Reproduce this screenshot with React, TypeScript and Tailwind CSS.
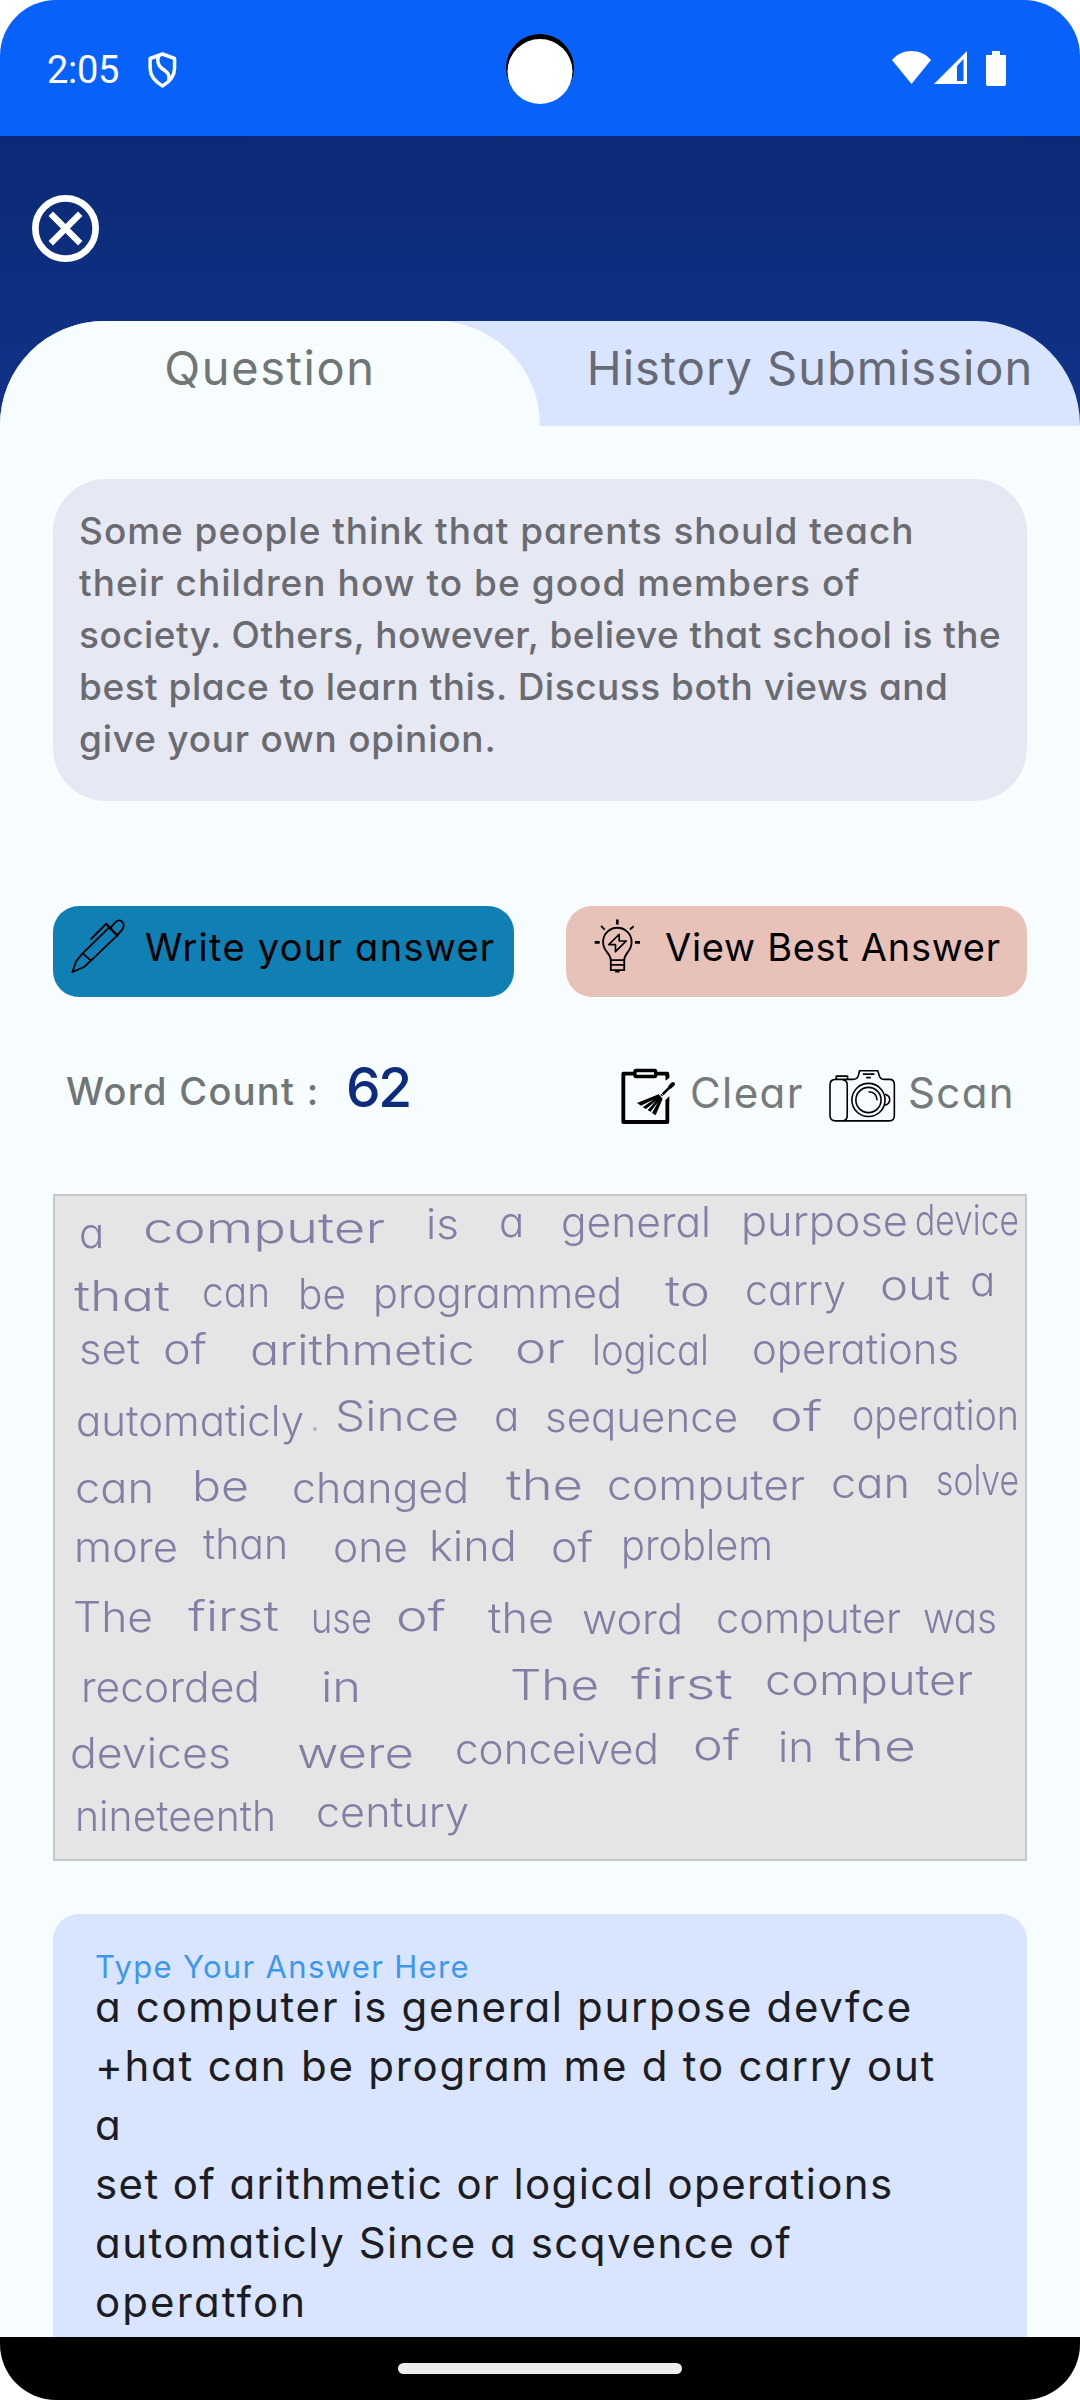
import React from "react";

type Line = { text: string; tracking: string };

const questionLines: Line[] = [
  { text: "Some people think that parents should teach", tracking: "tracking-[0.98px]" },
  { text: "their children how to be good members of", tracking: "tracking-[1.06px]" },
  { text: "society. Others, however, believe that school is the", tracking: "tracking-[0.46px]" },
  { text: "best place to learn this. Discuss both views and", tracking: "tracking-[0.52px]" },
  { text: "give your own opinion.", tracking: "tracking-[0.78px]" },
];

const answerLines: Line[] = [
  { text: "a computer is general purpose devfce", tracking: "tracking-[1.64px]" },
  { text: "+hat can be program me d to carry out", tracking: "tracking-[1.75px]" },
  { text: "a", tracking: "tracking-normal" },
  { text: "set of arithmetic or logical operations", tracking: "tracking-[1.38px]" },
  { text: "automaticly Since a scqvence of", tracking: "tracking-[1.53px]" },
  { text: "operatfon", tracking: "tracking-[2.1px]" },
];

// word, left, right, baseline
type Word = [string, number, number, number];

const handwriting: Word[] = [
  ["a", 28, 54, 54], ["computer", 92, 330, 49], ["is", 375, 404, 45], ["a", 448, 470, 43],
  ["general", 510, 656, 43], ["purpose", 690, 853, 42], ["device", 864, 964, 41],
  ["that", 23, 115, 117], ["can", 151, 215, 113], ["be", 247, 291, 115], ["programmed", 322, 567, 114],
  ["to", 614, 655, 112], ["carry", 694, 791, 111], ["out", 829, 895, 106], ["a", 919, 943, 102],
  ["set", 28, 85, 170], ["of", 112, 152, 170], ["arithmetic", 199, 420, 171], ["or", 464, 510, 169],
  ["logical", 541, 654, 171], ["operations", 701, 904, 170],
  ["automaticly", 25, 249, 242], ["Since", 284, 404, 237], ["a", 443, 465, 237],
  ["sequence", 494, 683, 238], ["of", 719, 767, 237], ["operation", 801, 964, 236],
  ["can", 24, 99, 309], ["be", 141, 194, 307], ["changed", 241, 414, 309], ["the", 455, 528, 306],
  ["computer", 556, 750, 306], ["can", 780, 855, 304], ["solve", 885, 964, 301],
  ["more", 23, 123, 368], ["than", 152, 233, 365], ["one", 282, 353, 368], ["kind", 378, 462, 367],
  ["of", 500, 538, 368], ["problem", 570, 718, 366],
  ["The", 22, 98, 438], ["first", 137, 224, 437], ["use", 260, 317, 439], ["of", 345, 391, 437],
  ["the", 437, 499, 439], ["word", 531, 628, 440], ["computer", 665, 846, 439], ["was", 872, 942, 439],
  ["recorded", 30, 205, 508], ["in", 270, 306, 508], ["The", 459, 544, 506], ["first", 580, 678, 505],
  ["computer", 714, 918, 501],
  ["devices", 19, 176, 574], ["were", 246, 359, 574], ["conceived", 404, 604, 570], ["of", 642, 685, 566],
  ["in", 727, 759, 568], ["the", 784, 861, 567],
  ["nineteenth", 24, 221, 637], ["century", 265, 414, 633],
];

function StatusBar() {
  return (
    <div className="relative flex h-[136px] shrink-0 items-start justify-between bg-[#0861f8] pr-[74px] pl-[47px] text-white">
      <div className="flex items-start">
        <span className="mt-[47px] w-[101px] font-[Roboto] text-[38px] leading-[46px] tracking-[-0.3px]">2:05</span>
        <svg className="mt-[52px] h-[36px] w-[29px]" viewBox="0 0 30 36" preserveAspectRatio="none" fill="none" stroke="currentColor" strokeWidth="3.6" strokeLinejoin="round">
          <path d="M15 2 L27.500 6.500 V16 C27.500 25 22 30 15 34 C8 30 2.200 25 2.200 16 V6.500 Z" />
          <path d="M11 4 C9 9 10 13 14.500 16.500 C20 20 22.500 22 21.500 28" />
        </svg>
      </div>
      <div className="absolute top-[34px] left-1/2 size-[68px] -translate-x-1/2 rounded-full bg-black" />
      <div className="absolute top-[39px] left-1/2 size-[65px] -translate-x-1/2 rounded-full bg-white" />
      <div className="mt-[51px] flex items-start">
        <svg className="h-[33px] w-[39px]" viewBox="0 0 39 33" fill="currentColor">
          <path d="M0 9 C10 -3 29 -3 39 9 L19.500 33 Z" />
        </svg>
        <svg className="ml-[3px] h-[33px] w-[33px]" viewBox="0 0 33 33">
          <path fill="currentColor" fillRule="evenodd" d="M33 0 V33 H0 Z M29.500 8 L23 15 V30 H29.500 Z" />
        </svg>
        <svg className="ml-[19px] h-[35px] w-[20px]" viewBox="0 0 20 35" fill="currentColor">
          <path d="M6 0 H14 V4 H20 V33 Q20 35 18 35 H2 Q0 35 0 33 V4 H6 Z" />
        </svg>
      </div>
    </div>
  );
}

function PenIcon() {
  return (
    <svg className="h-[54px] w-[54px]" viewBox="62 40 162 162" fill="none" stroke="black" strokeWidth="5.500" strokeLinejoin="round" strokeLinecap="round">
      <path d="M66 199 L78 166 L97 143 L122 165 L101 184 Z M97 143 L176 66 M122 165 L200 90 M122 100 L167 55" />
      <path d="M181 66 L197 48 Q209 39 217 50 Q224 61 215 73 L200 89" />
      <path d="M168 55 L201 90" strokeWidth="7.500" />
    </svg>
  );
}

function BulbIcon() {
  return (
    <svg className="h-[54px] w-[47px]" viewBox="163 86 140 160" fill="none" stroke="black" strokeWidth="5.500" strokeLinejoin="round">
      <path d="M213 208 C213 186 190 184 190 154 A42.500 42.500 0 0 1 275 154 C275 184 253 186 253 208 V238 H213 Z" />
      <path d="M213 208 H253 M213 222 H253 M226 242 H239" />
      <path d="M238 131 L207 162 H227 V183 L259 151 H238 Z" strokeWidth="5" />
      <path d="M232.500 87 V102 M165 155 H180 M285 155 H300" strokeWidth="8" />
      <path d="M184 106 L195 117 M281 107 L270 117" strokeWidth="5.500" />
    </svg>
  );
}

function ClipboardBrushIcon() {
  return (
    <svg className="mt-[11px] h-[57px] w-[55px]" viewBox="32 36 165 171" fill="none" stroke="black">
      <path strokeWidth="11.500" strokeLinejoin="round" d="M72 53 H39 V198 H171 V134 M138 53 H171 V62" />
      <path fill="black" stroke="none" d="M165.500 132 L177 120 V136 H165.500 Z M165.500 58 H177 V65 L168 73 H165.500 Z" />
      <rect x="74" y="43.500" width="62" height="18" rx="3" strokeWidth="10" />
      <path strokeWidth="12" strokeLinecap="round" d="M188 84 L180 92" />
      <path strokeWidth="8" d="M184 88 L153 119" />
      <path strokeWidth="3" stroke="#f7fcff" d="M150 110 L163 122" />
      <path fill="black" stroke="none" d="M145 115 L80 141 L92 149 L131 130 L97 154 L107 159 L137 134 L112 163 L121 167 L143 138 L125 171 L136 178 L157 128 Z" />
    </svg>
  );
}

function CameraIcon() {
  return (
    <svg className="mt-[12px] h-[54px] w-[67px]" viewBox="656 42 202 162" fill="none" stroke="black" strokeWidth="4.800" strokeLinejoin="round">
      <path d="M676 73 H728 Q742 73 745 60 L748 47 H803 L807 60 Q810 73 822 73 H838 Q853 73 853 88 V182 Q853 198 838 198 H676 Q659 198 659 182 V90 Q659 73 676 73 Z" />
      <path d="M697 74 Q711 75 711 90 V182 Q711 197 697 198 M678 72 V63 H712 V72 M758 57 H793 M768 67.500 H782" />
      <circle cx="775" cy="135" r="50" />
      <circle cx="775" cy="135" r="38" />
      <path d="M775 110 Q800 111 801 136 M825 118 Q839 122 839 134 Q839 146 825 151" />
    </svg>
  );
}

function HandwrittenPage() {
  return (
    <div className="mx-[53px] mt-[67px] h-[667px] shrink-0 border-[2px] border-[#c8c8c8] bg-[#e5e5e5]">
      <svg className="h-[663px] w-[970px] blur-[0.5px]" viewBox="2 2 970 663">
        <g fill="#827fa5" fontFamily="Inter, sans-serif" fontSize="42" fontWeight="300">
          {handwriting.map(([word, left, right, baseline], i) => (
            <text
              key={i}
              x={left - 2}
              y={baseline}
              textLength={word.length > 1 ? right - left + 4 : undefined}
              lengthAdjust="spacingAndGlyphs"
            >
              {word}
            </text>
          ))}
          <circle cx="262" cy="235" r="2" opacity="0.5" />
        </g>
      </svg>
    </div>
  );
}

export default function App() {
  return (
    <div className="h-[2400px] w-[1080px] overflow-hidden bg-white">
      <div className="flex h-full w-full flex-col overflow-hidden rounded-[56px] bg-[#f7fcff] font-[Inter,sans-serif] [font-feature-settings:'cv11']">
        <StatusBar />

        <header className="flex h-[290px] shrink-0 flex-col bg-linear-to-b from-[#0b2a76] to-[#103389]">
          <div className="h-[185px] pt-[59px] pl-[32px]">
            <svg className="size-[67px]" viewBox="0 0 66 66" fill="none" stroke="white">
              <circle cx="33" cy="33" r="29.700" strokeWidth="6.600" />
              <path d="M18.500 18.500 L47.500 47.500 M47.500 18.500 L18.500 47.500" strokeWidth="6.200" />
            </svg>
          </div>
          <div className="flex h-[105px] rounded-t-[104px] bg-[#d9e4ff] text-center text-[47px] leading-[94px]">
            <div className="w-1/2 rounded-t-[104px] bg-[#f7fcff] tracking-[1.6px] text-[#707575]">Question</div>
            <div className="w-1/2 tracking-[1px] whitespace-nowrap text-[#666a77]">History Submission</div>
          </div>
        </header>

        <section className="mx-[53px] mt-[53px] h-[322px] shrink-0 rounded-[53px] bg-[#e6e8f3] pt-[26px] pl-[26px] text-[37px] leading-[52px] font-medium text-[#6a6b70]">
          {questionLines.map((l) => (
            <p key={l.text} className={`whitespace-nowrap ${l.tracking}`}>{l.text}</p>
          ))}
        </section>

        <div className="mx-[53px] mt-[105px] flex h-[91px] shrink-0 justify-between text-[38px] leading-[56px] whitespace-nowrap text-black">
          <button className="flex w-[461px] items-start rounded-[26px] bg-[#107fb3] pt-[13px] pl-[18px]">
            <PenIcon />
            <span className="ml-[20px] tracking-[1.28px]">Write your answer</span>
          </button>
          <button className="flex w-[461px] items-start rounded-[26px] bg-[#e8c2b8] pt-[13px] pl-[28px]">
            <BulbIcon />
            <span className="ml-[24px] tracking-[0.7px]">View Best Answer</span>
          </button>
        </div>

        <div className="mt-[60px] flex h-[70px] shrink-0 items-start pl-[66px] whitespace-nowrap">
          <span className="w-[280px] text-[38px] leading-[68px] font-medium tracking-[1.3px] text-[#707575]">Word Count :</span>
          <span className="w-[275px] text-[55px] leading-[60px] font-medium tracking-[-2.5px] text-[#0d2c7e]">62</span>
          <ClipboardBrushIcon />
          <span className="ml-[14px] w-[139px] text-[42px] leading-[71px] tracking-[1.4px] text-[#757a7b]">Clear</span>
          <CameraIcon />
          <span className="ml-[12px] text-[42px] leading-[71px] tracking-[1.4px] text-[#757a7b]">Scan</span>
        </div>

        <HandwrittenPage />

        <section className="mx-[53px] mt-[53px] h-[423px] shrink-0 overflow-hidden rounded-t-[26px] bg-[#d9e4ff] pt-[41px] pl-[42px] whitespace-nowrap">
          <p className="text-[31px] leading-[23px] tracking-[1.33px] text-[#3d98ec]">Type Your Answer Here</p>
          <div className="-mt-px text-[42px] leading-[59px] text-[#1c1d22]">
            {answerLines.map((l) => (
              <p key={l.text} className={l.tracking}>{l.text}</p>
            ))}
          </div>
        </section>

        <nav className="flex h-[63px] shrink-0 justify-center bg-black pt-[26px]">
          <div className="h-[11px] w-[284px] rounded-full bg-[#ececec]" />
        </nav>
      </div>
    </div>
  );
}
